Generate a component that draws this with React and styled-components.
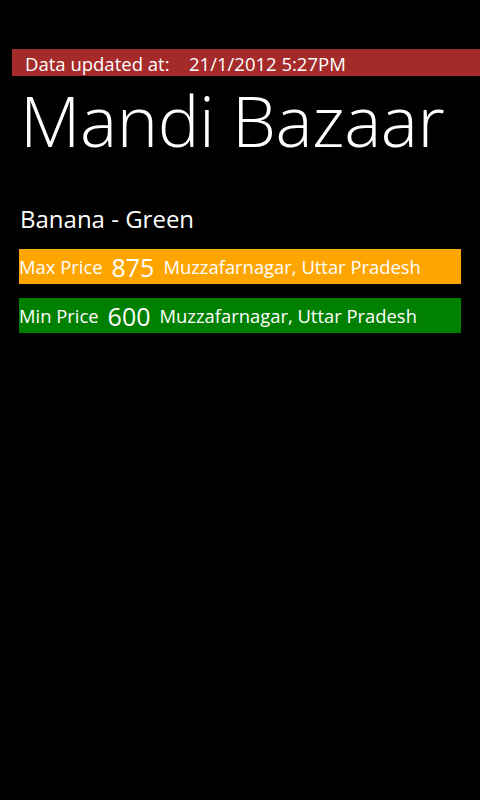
import React from 'react';
import styled, { createGlobalStyle } from 'styled-components';

const Global = createGlobalStyle`
  html, body {
    margin: 0;
    padding: 0;
    background: #000;
  }
  body {
    width: 480px;
    height: 800px;
    font-family: "Open Sans", "Noto Sans", sans-serif;
    color: #fff;
  }
`;

const Page = styled.div`
  display: flex;
  flex-direction: column;
  padding-top: 49px;
`;

const StatusBar = styled.div`
  margin-left: 12px;
  height: 27px;
  box-sizing: border-box;
  padding: 3px 0 0 13px;
  background: #a52a2a;
  display: flex;
  align-items: center;
  font-size: 18.5px;
  line-height: 1;
`;

const StatusLabel = styled.span`
  width: 164px;
  flex-shrink: 0;
`;

const Title = styled.h1`
  margin: 9px 0 0 20px;
  font-size: 70px;
  font-weight: 300;
  line-height: 1;
  letter-spacing: -0.4px;
`;

const Content = styled.div`
  padding: 0 19px;
  margin-top: 52px;
  display: flex;
  flex-direction: column;
  gap: 14px;
`;

const Commodity = styled.div`
  font-size: 24px;
  line-height: 1;
  margin-left: 1px;
  margin-bottom: 4px;
`;

const PriceRow = styled.div`
  height: 35px;
  background: ${p => p.$color};
  display: flex;
  align-items: center;
  gap: 9px;
  font-size: 18.4px;
  white-space: nowrap;
`;

const PriceValue = styled.span`
  font-size: 25px;
`;

const rows = [
  { label: 'Max Price', value: '875', place: 'Muzzafarnagar, Uttar Pradesh', color: '#ffa500' },
  { label: 'Min Price', value: '600', place: 'Muzzafarnagar, Uttar Pradesh', color: '#008000' },
];

const App = () => (
  <>
    <Global />
    <Page>
      <StatusBar>
        <StatusLabel>Data updated at:</StatusLabel>
        <span>21/1/2012 5:27PM</span>
      </StatusBar>
      <Title>Mandi Bazaar</Title>
      <Content>
        <Commodity>Banana - Green</Commodity>
        {rows.map(r => (
          <PriceRow key={r.label} $color={r.color}>
            <span>{r.label}</span>
            <PriceValue>{r.value}</PriceValue>
            <span>{r.place}</span>
          </PriceRow>
        ))}
      </Content>
    </Page>
  </>
);

export default App;
